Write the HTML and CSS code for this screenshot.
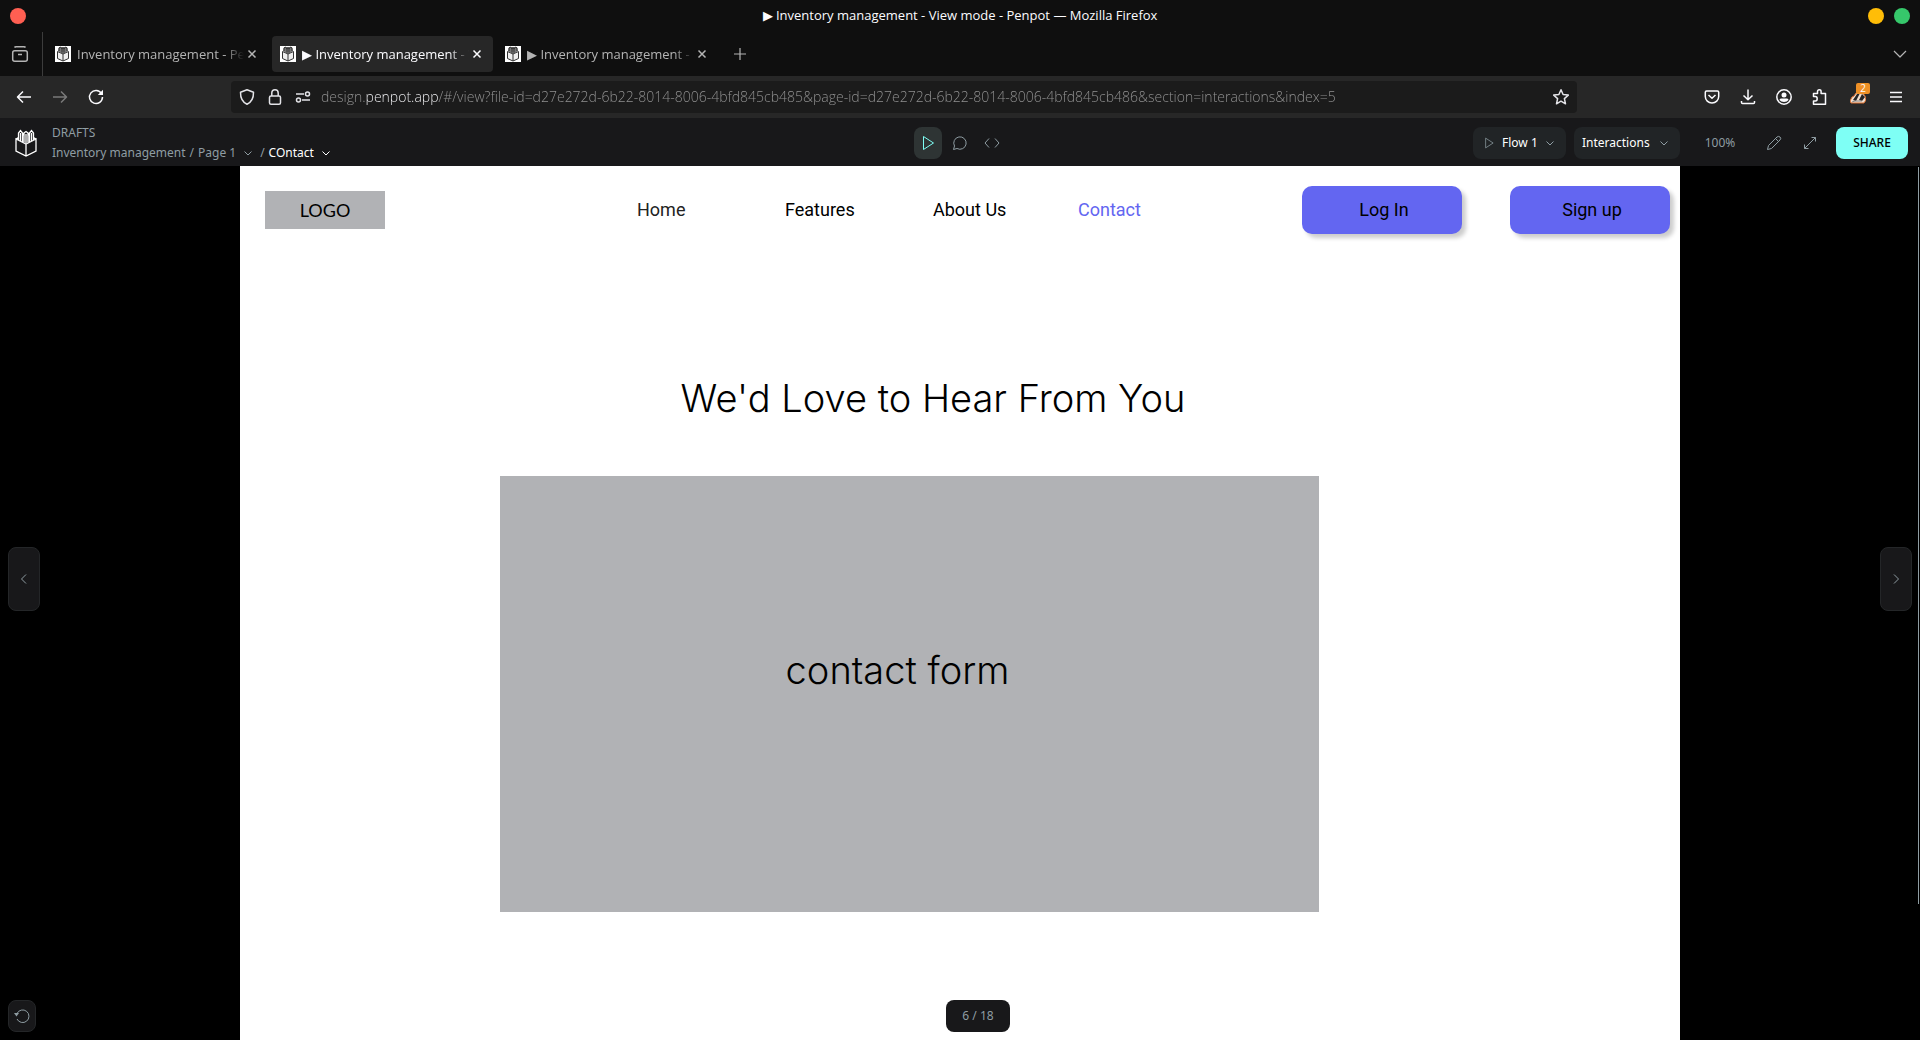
FILE: index.html
```html
<!DOCTYPE html>
<html lang="en">
<head>
<meta charset="utf-8">
<meta name="viewport" content="width=device-width, initial-scale=1">
<title>▶ Inventory management - View mode - Penpot</title>
<link rel="stylesheet" href="styles.css">
</head>
<body>
<svg class="sprite" aria-hidden="true">
  <symbol id="penpot" viewBox="0 0 22 28">
    <path d="M1 10 11 15 21 10V22L11 27 1 22ZM11 15V27" />
    <path d="M1 10 3.500 8.500M21 10 18.500 8.500M3.500 11V4L5.500 1.500 7.500 4V13M7.500 6 9 4 11 2.500 13 4 14.500 6M9 4.500V13.500M13 4.500V13.500M14.500 13V4L16.500 1.500 18.500 4V11M5.500 4V12M11 5V14M16.500 4V12" />
  </symbol>
  <symbol id="favicon" viewBox="0 0 16 16">
    <path d="M0 0H16V16H0Z" fill="#fff" />
    <path d="M4 1H12L13 5 8 8 3 5Z" fill="#777" />
    <path d="M2.500 5.500 8 8 13.500 5.500V12.500L8 15 2.500 12.500ZM8 8V15" fill="#eee" stroke="#333" />
    <path d="M4 5V2L5.500 1 7 3 8 1.500 9 3 10.500 1 12 2V5M7 3V6.500M9 3V6.500" fill="none" stroke="#333" />
  </symbol>
  <symbol id="close" viewBox="0 0 16 16"><path d="m4.500 4.500 7 7m0-7-7 7" /></symbol>
  <symbol id="chevron" viewBox="0 0 16 16"><path d="m4.500 6.500 3.500 3.500 3.500-3.500" /></symbol>
  <symbol id="play" viewBox="0 0 16 16"><path d="M3.500 1.500 13.500 8 3.500 14.500Z" /></symbol>
</svg>

<header class="titlebar">
  <button class="dot dot-close" aria-label="Close window"></button>
  <span class="window-title">▶ Inventory management - View mode - Penpot — Mozilla Firefox</span>
  <button class="dot dot-min" aria-label="Minimise window"></button>
  <button class="dot dot-max" aria-label="Maximise window"></button>
</header>

<div class="tabbar">
  <button class="tabs-view" aria-label="Recent browsing">
    <svg class="icon" viewBox="0 0 16 16"><path d="M2.500 1.500Q3 .7 4 .7H12Q13 .7 13.500 1.500" /><rect x=".7" y="4.700" width="14.600" height="10.600" rx="2" /><path d="M6 8.500H10" /></svg>
  </button>
  <div class="tab">
    <svg class="favicon"><use href="#favicon" /></svg>
    <span class="tab-label">Inventory management - Penpot</span>
    <button class="tab-close" aria-label="Close tab"><svg class="icon"><use href="#close" /></svg></button>
  </div>
  <div class="tab tab-active">
    <svg class="favicon"><use href="#favicon" /></svg>
    <span class="tab-label">▶ Inventory management - View mode</span>
    <button class="tab-close" aria-label="Close tab"><svg class="icon"><use href="#close" /></svg></button>
  </div>
  <div class="tab">
    <svg class="favicon"><use href="#favicon" /></svg>
    <span class="tab-label">▶ Inventory management - View mode</span>
    <button class="tab-close" aria-label="Close tab"><svg class="icon"><use href="#close" /></svg></button>
  </div>
  <button class="tab-new" aria-label="New tab"><svg class="icon" viewBox="0 0 16 16"><path d="M8 2V14M2 8H14" /></svg></button>
  <button class="tab-list" aria-label="List all tabs"><svg class="icon" viewBox="0 0 16 16"><path d="m2 5 6 6 6-6" /></svg></button>
</div>

<div class="navbar">
  <button class="tool" aria-label="Back"><svg class="icon" viewBox="0 0 16 16"><path d="M15 8H1.500M7 2.500 1.500 8 7 13.500" /></svg></button>
  <button class="tool tool-off" aria-label="Forward"><svg class="icon" viewBox="0 0 16 16"><path d="M1 8H14.500M9 2.500 14.500 8 9 13.500" /></svg></button>
  <button class="tool" aria-label="Reload"><svg class="icon" viewBox="0 0 16 16"><path d="M13.500 4.500A6.500 6.500 0 1 0 14.500 8" /><path d="M15 .8V6H9.800Z" class="solid" /></svg></button>
  <span class="spacer"></span>
  <div class="urlbar">
    <button class="url-tool" aria-label="Tracking protection"><svg class="icon" viewBox="0 0 16 16"><path d="M8 .8 14.500 3.300C14.600 9 12.500 13.200 8 15.300 3.500 13.200 1.400 9 1.500 3.300Z" /></svg></button>
    <button class="url-tool" aria-label="Connection secure"><svg class="icon" viewBox="0 0 16 16"><rect x="2.500" y="7" width="11" height="8.300" rx="1.500" /><path d="M4.800 7V4Q4.800 .8 8 .8T11.200 4V7" /></svg></button>
    <button class="url-tool" aria-label="Permissions"><svg class="icon" viewBox="0 0 16 16"><path d="M1 5H9M7 11H15" /><circle cx="12.500" cy="5" r="2" /><circle cx="3.500" cy="11" r="2" /></svg></button>
    <input class="url" aria-label="Address" value="design.penpot.app/#/view?file-id=d27e272d-6b22-8014-8006-4bfd845cb485&amp;page-id=d27e272d-6b22-8014-8006-4bfd845cb486&amp;section=interactions&amp;index=5">
    <button class="url-tool" aria-label="Bookmark"><svg class="icon" viewBox="0 0 16 16"><path d="m8 .8 2.100 4.700 5.200.6-3.900 3.500 1.100 5.200L8 12.200l-4.500 2.600 1.100-5.200L.7 6.100l5.200-.6Z" /></svg></button>
  </div>
  <span class="spacer"></span>
  <button class="tool" aria-label="Pocket"><svg class="icon" viewBox="0 0 16 16"><path d="M2.500 2H13.500Q14.700 2 14.700 3.200V7.500A6.700 6.500 0 0 1 1.300 7.500V3.200Q1.300 2 2.500 2ZM4.500 6 8 9.200 11.500 6" /></svg></button>
  <button class="tool" aria-label="Downloads"><svg class="icon" viewBox="0 0 16 16"><path d="M8 .5V10.500M3.500 6.500 8 10.800 12.500 6.500M1.500 12V13.500Q1.500 14.500 2.500 14.500H13.500Q14.500 14.500 14.500 13.500V12" /></svg></button>
  <button class="tool" aria-label="Account"><svg class="icon" viewBox="0 0 16 16"><circle cx="8" cy="8" r="7.200" /><circle cx="8" cy="6" r="2.500" class="solid" /><path d="M3.500 11Q3.500 9.500 5 9.500H11Q12.500 9.500 12.500 11 11 13 8 13T3.500 11Z" class="solid" /></svg></button>
  <button class="tool" aria-label="Extensions"><svg class="icon" viewBox="0 0 16 16"><path d="M1.500 7.500V4.500H5.500V2.500Q5.500 .8 7.300 .8T9.100 2.500V4.500H13.500V15.200H1.500V12H3.500Q5.200 12 5.200 9.800T3.500 7.500Z" /></svg></button>
  <button class="tool tool-badged" aria-label="Privacy Badger">
    <svg class="badger" viewBox="0 0 16 16"><path d="M0 12 2 8 4 7 6 4 12 3 15 7 16 11 14 14H1Z" fill="#f3dfd0" stroke="#d96c2c" /><path d="M3 11 7 5 10 4 6 12ZM9 11 12 5 15 8 12 12Z" fill="#252525" /><path d="M2 13 5 12H12" stroke="#888" fill="none" /></svg>
    <span class="badge">2</span>
  </button>
  <button class="tool" aria-label="Menu"><svg class="icon" viewBox="0 0 16 16"><path d="M2 3.500H14M2 8H14M2 12.500H14" /></svg></button>
</div>

<div class="viewer-bar">
  <div class="viewer-left">
    <a class="home" href="#" aria-label="Penpot"><svg class="logo-mark"><use href="#penpot" /></svg></a>
    <div class="crumbs">
      <a class="project" href="#">DRAFTS</a>
      <div class="trail">
        <a href="#">Inventory management</a><span class="slash">/</span>
        <button class="crumb">Page 1<svg class="chevron"><use href="#chevron" /></svg></button><span class="slash">/</span>
        <button class="crumb crumb-current">COntact<svg class="chevron"><use href="#chevron" /></svg></button>
      </div>
    </div>
  </div>
  <div class="modes">
    <button class="mode mode-active" aria-label="View mode"><svg class="line"><use href="#play" /></svg></button>
    <button class="mode" aria-label="Comments"><svg class="line" viewBox="0 0 16 16"><path d="M1.500 14.500 2.500 11A6.200 6.200 0 1 1 5 13.500Z" /></svg></button>
    <button class="mode" aria-label="Inspect"><svg class="line" viewBox="0 0 16 16"><path d="M5 3.500 1 8 5 12.500M11 3.500 15 8 11 12.500" /></svg></button>
  </div>
  <div class="viewer-right">
    <div class="picker">
      <svg class="picker-play"><use href="#play" /></svg>
      <select class="select select-flow" aria-label="Flow"><option>Flow 1</option></select>
      <svg class="chevron picker-arrow"><use href="#chevron" /></svg>
    </div>
    <div class="picker">
      <select class="select select-inter" aria-label="Interactions"><option>Interactions</option></select>
      <svg class="chevron picker-arrow"><use href="#chevron" /></svg>
    </div>
    <button class="zoom">100%</button>
    <button class="edit" aria-label="Edit file"><svg class="line" viewBox="0 0 16 16"><path d="M1.500 14.500 2.500 10.500 11 2Q12.500 .8 14 2T14 5L5.500 13.500ZM9.500 3.500 12.500 6.500" /></svg></button>
    <button class="edit" aria-label="Full screen"><svg class="line" viewBox="0 0 16 16"><path d="M2.500 13.500 13.500 2.500M9.500 2.500H13.500V6.500M2.500 9.500V13.500H6.500" /></svg></button>
    <button class="share">SHARE</button>
  </div>
</div>

<main class="stage">
  <article class="artboard">
    <header class="site-header">
      <div class="site-logo">LOGO</div>
      <nav class="site-nav">
        <a class="home-link" href="#">Home</a>
        <a href="#">Features</a>
        <a href="#">About Us</a>
        <a class="current" href="#">Contact</a>
      </nav>
      <div class="site-actions">
        <button class="cta">Log In</button>
        <button class="cta">Sign up</button>
      </div>
    </header>
    <h1 class="headline">We'd Love to Hear From You</h1>
    <section class="form-area">contact form</section>
  </article>
  <div class="overlay">
    <div class="overlay-sides">
      <button class="step" aria-label="Previous frame"><svg class="line" viewBox="0 0 16 16"><path d="M10 3.500 5.500 8 10 12.500" /></svg></button>
      <button class="step" aria-label="Next frame"><svg class="line" viewBox="0 0 16 16"><path d="M6 3.500 10.500 8 6 12.500" /></svg></button>
    </div>
    <div class="overlay-bottom">
      <button class="reset" aria-label="Reset"><svg class="line" viewBox="0 0 16 16"><path d="M3 5.500A6.300 6.300 0 1 1 3 11" /><path d="M0 5H5L2.500 8.500Z" class="tip" /></svg></button>
      <div class="counter-wrap"><span class="counter">6 / 18</span></div>
    </div>
  </div>
  <div class="scroll-thumb"></div>
</main>
</body>
</html>
```
FILE: styles.css
```css
* { box-sizing: border-box; }

body {
  margin: 0;
  min-height: 100vh;
  display: flex;
  flex-direction: column;
  background: #000;
  color: #fbfbfe;
  font: 13px/16px "Open Sans", sans-serif;
}

button {
  margin: 0;
  padding: 0;
  border: 0;
  background: none;
  color: inherit;
  font: inherit;
}

a { color: inherit; text-decoration: none; }
svg { display: block; flex: none; }
.sprite { position: absolute; width: 0; height: 0; }

.icon {
  width: 16px;
  height: 16px;
  fill: none;
  stroke: currentColor;
  stroke-width: 1.5;
  stroke-linejoin: round;
  overflow: visible;
}
.icon .solid { fill: currentColor; stroke: none; }

.line {
  width: 16px;
  height: 16px;
  fill: none;
  stroke: currentColor;
  stroke-width: 1;
  stroke-linejoin: round;
}
.line .tip { fill: currentColor; stroke: none; }

/* Window title */
.titlebar {
  display: flex;
  align-items: center;
  gap: 10px;
  height: 32px;
  padding: 0 10px;
  background: #0f0f0f;
}
.window-title {
  flex: 1;
  padding: 0 0 2px 26px;
  font-weight: 500;
  text-align: center;
}
.dot { width: 16px; height: 16px; border-radius: 50%; }
.dot-close { background: #ff5f52; }
.dot-min { background: #ffbd07; }
.dot-max { background: #36c86b; }

/* Tabs */
.tabbar {
  display: flex;
  align-items: center;
  gap: 4px;
  height: 44px;
  background: #0f0f0f;
  color: #b4b4b4;
}
.tabs-view {
  display: grid;
  place-items: center;
  align-self: stretch;
  width: 43px;
  padding-right: 2px;
  border-right: 1px solid #3c3c3c;
}
.tab {
  display: flex;
  align-items: center;
  gap: 6px;
  width: 221px;
  height: 36px;
  padding: 0 8px;
  border-radius: 4px;
}
.tab-active { background: #272727; color: #fbfbfe; }
.favicon { width: 16px; height: 16px; }
.tab-label {
  flex: 1;
  overflow: hidden;
  white-space: nowrap;
  mask-image: linear-gradient(to left, transparent, #000 20px);
}
.tab-close { margin-left: -6px; }
.tab-new { display: grid; place-items: center; width: 36px; height: 36px; }
.tab-list { display: grid; place-items: center; width: 40px; height: 36px; margin-left: auto; }
.tab-new .icon, .tab-list .icon { stroke-width: 1.2; }

/* Navigation */
.navbar {
  display: flex;
  align-items: center;
  height: 42px;
  padding: 0 6px;
  background: #272727;
}
.tool { display: grid; place-items: center; width: 36px; height: 32px; flex: none; }
.tool-off { color: #7a7a7a; }
.tool-badged { position: relative; width: 40px; }
.badger { width: 16px; height: 16px; }
.badge {
  position: absolute;
  top: 2px;
  right: 8px;
  width: 14px;
  height: 11px;
  border-radius: 2px;
  background: #ee9026;
  font-size: 10px;
  line-height: 11px;
}
.spacer { flex: 1; max-width: 117px; }
.urlbar {
  display: flex;
  align-items: center;
  flex: 10;
  height: 32px;
  padding: 0 2px;
  border-radius: 4px;
  background: #1b1b1b;
}
.url-tool { display: grid; place-items: center; width: 28px; height: 32px; color: #e4e4e8; }
.url {
  flex: 1;
  min-width: 0;
  height: 32px;
  margin-left: 4px;
  padding: 0 0 2px;
  border: 0;
  /* the host name is lit, the rest of the address is dimmed */
  background: linear-gradient(to right, #969696 45px, #fbfbfe 45px 118px, #969696 118px);
  background-clip: text;
  color: transparent;
  font: 300 14px "Open Sans", sans-serif;
}

/* Viewer bar */
.viewer-bar {
  display: grid;
  grid-template-columns: 1fr auto 1fr;
  align-items: center;
  height: 48px;
  padding-top: 2px;
  background: #18181a;
  color: #8f9da3;
  font: 12px/16px "Noto Sans", sans-serif;
}
.viewer-left { display: flex; align-items: center; gap: 15px; padding-left: 15px; }
.logo-mark { width: 22px; height: 28px; fill: none; stroke: #fff; stroke-width: 1.3; }
.crumbs { display: flex; flex-direction: column; gap: 4px; }
.trail { display: flex; align-items: center; gap: 4px; }
.crumb { display: flex; align-items: center; gap: 4px; }
.crumb-current { color: #fff; }
.chevron { width: 16px; height: 16px; fill: none; stroke: currentColor; }
.modes { display: flex; gap: 4px; }
.mode { display: grid; place-items: center; width: 28px; height: 32px; border-radius: 8px; }
.mode-active { background: #2e3434; color: #7efff5; }
.viewer-right { display: flex; align-items: center; justify-content: flex-end; padding-right: 12px; }
.picker { position: relative; margin-right: 8px; }
.select {
  appearance: none;
  height: 32px;
  border: 0;
  border-radius: 8px;
  background: #212426;
  color: #fff;
  font: inherit;
}
.select-flow { width: 93px; padding: 0 0 0 29px; }
.select-inter { width: 106px; padding: 0 0 0 8px; }
.picker-play {
  position: absolute;
  top: 10px;
  left: 10px;
  width: 12px;
  height: 12px;
  fill: none;
  stroke: currentColor;
}
.picker-arrow { position: absolute; top: 8px; right: 8px; pointer-events: none; }
.zoom { width: 64px; margin-right: 4px; }
.edit { display: grid; place-items: center; width: 36px; height: 32px; }
.share {
  width: 72px;
  height: 32px;
  margin-left: 8px;
  border-radius: 8px;
  background: #7efff5;
  color: #000;
  font-size: 12px;
  font-weight: 500;
}

/* Stage */
.stage {
  position: relative;
  flex: 1;
  display: flex;
  justify-content: center;
}
.artboard {
  width: 75%;
  padding-bottom: 128px;
  background: #fff;
  color: #000;
}
.site-header {
  display: flex;
  align-items: center;
  height: 88px;
  padding: 0 10px 0 25px;
  font: 18px/24px Roboto, sans-serif;
}
.site-logo {
  width: 120px;
  background: #b1b2b5;
  font: 18px/38px Lato, sans-serif;
  text-align: center;
}
.site-nav {
  display: grid;
  grid-template-columns: 148px 148px 145px auto;
  margin-left: 252px;
}
.home-link { color: #222; }
.current { color: #6366f1; }
.site-actions { display: flex; gap: 48px; margin-left: auto; }
.cta {
  width: 160px;
  height: 48px;
  padding-left: 4px;
  border-radius: 10px;
  background: #6366f1;
  box-shadow: 4px 4px 4px rgba(0, 0, 0, 0.2);
}
.headline, .form-area { font: 300 38px/44px Inter, sans-serif; }
.headline {
  margin: 122px 0 56px;
  padding-right: 54px;
  text-align: center;
}
.form-area {
  display: grid;
  place-items: center;
  height: 436px;
  margin: 0 361px 0 260px;
  padding: 0 24px 48px 0;
  background: #b1b2b5;
}

/* Controls floating over the artboard */
.overlay {
  position: absolute;
  inset: 0;
  display: flex;
  flex-direction: column;
  color: #8f9da3;
  font: 12px/16px "Noto Sans", sans-serif;
}
.overlay-sides {
  flex: 1;
  display: flex;
  align-items: center;
  justify-content: space-between;
  padding: 0 8px;
}
.step, .reset {
  display: grid;
  place-items: center;
  border: 1px solid #242628;
  border-radius: 8px;
  background: #18181a;
}
.step { width: 32px; height: 64px; }
.reset { width: 28px; height: 32px; }
.overlay-bottom { display: flex; padding: 8px 0 8px 8px; }
.counter-wrap { flex: 1; display: flex; justify-content: center; }
.counter {
  width: 64px;
  border-radius: 8px;
  background: #18181a;
  line-height: 32px;
  text-align: center;
}
.scroll-thumb {
  position: absolute;
  top: 1px;
  right: 1px;
  width: 1px;
  height: 737px;
  background: #8f9da3;
}
```
